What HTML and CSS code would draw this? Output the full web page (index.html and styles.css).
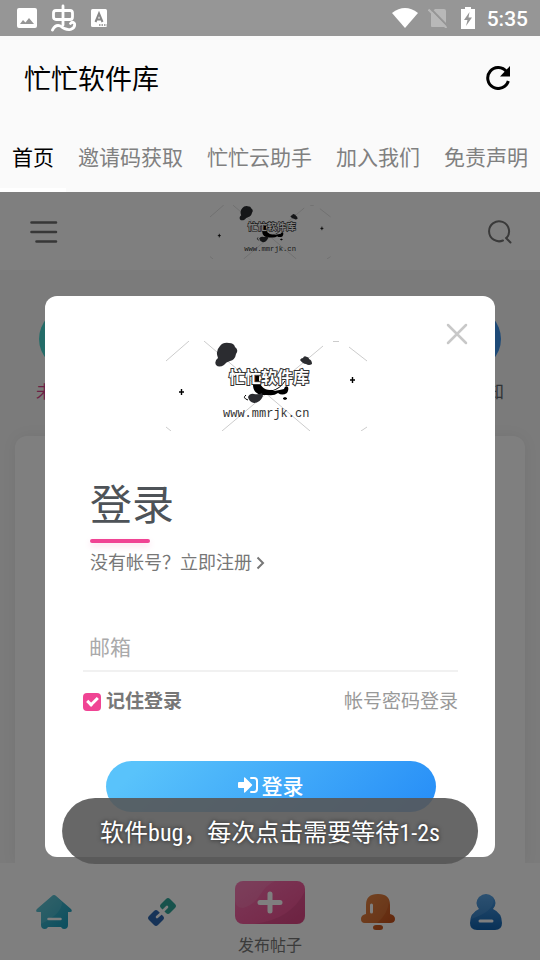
FILE: index.html
```html
<!DOCTYPE html>
<html lang="zh-CN">
<head>
    <meta charset="UTF-8">
    <meta name="viewport" content="width=device-width, initial-scale=1.0">
    <title>忙忙软件库</title>
    <link rel="stylesheet" href="styles.css">
</head>
<body>
    <svg class="defs" width="0" height="0" aria-hidden="true">
        <symbol id="logo" viewBox="0 0 210 90">
            <g fill="none" stroke="#ccc" stroke-width="1">
                <path d="M0 20 23 0M38 0l106 90M157 5 56 90M167 .5h6M183 6l18 14M0 86l5 4M201 86l-6 4"/>
            </g>
            <path fill="#2b2c30" d="M54 5q3-4 9-3 5 0 6 4 4 3 1 7-1 6-6 7-4 1-6 4-5 3-8 0-2-4 2-7-3-7 2-12zM134 19q1-2 3-2 1-3 4-1 2 0 2 2 3 1 3 5-3 2-6 0-3 0-6-4z"/>
            <path fill="#000" d="M89 35q5-2 7 3 2 9 12 12 6-1 10-2 1-4 4-2 1 3-1 6-5 3-9 0-4 3-10 2-15 1-15-10z"/>
            <path fill="#2b2c30" d="M82 56q2-4 6-3 5 1 8-1l1 3q-3 7-9 7-5-1-6-6z"/>
            <path fill="none" stroke="#000" d="M80 54q-4 3 2 5M105 50q9-2 14-10"/>
            <path fill="none" stroke="#000" stroke-width="1.4" d="M13 51h5M15.500 48v6M184 39h5M186.500 36v6M117 57.500h4M119 56v3"/>
            <circle cx="104" cy="38" r="11" fill="#fff"/>
        </symbol>
        <linearGradient id="gHome" x1="0" y1="0" x2="1" y2="1">
            <stop offset="0" stop-color="#5dc0d0"/><stop offset="1" stop-color="#109abc"/>
        </linearGradient>
        <linearGradient id="gPost" x1="0" y1="0" x2="1" y2="1">
            <stop offset="0" stop-color="#f870b0"/><stop offset="1" stop-color="#ea4c8c"/>
        </linearGradient>
        <linearGradient id="gBell" x1="0" y1="0" x2="1" y2="1">
            <stop offset="0" stop-color="#e4803c"/><stop offset="1" stop-color="#c04a16"/>
        </linearGradient>
        <linearGradient id="gUser" x1="0" y1="0" x2="0" y2="1">
            <stop offset="0" stop-color="#4c9be0"/><stop offset="1" stop-color="#1262ae"/>
        </linearGradient>
    </svg>

    <div class="statusbar">
        <svg class="st-img" width="20" height="20" viewBox="0 0 20 20"><path fill="#fff" fill-rule="evenodd" d="M2 0h16q2 0 2 2v16q0 2-2 2H2q-2 0-2-2V2q0-2 2-2zM3 16h14l-5-6-3.500 4.500L6 12z"/></svg>
        <svg class="st-bug" width="26" height="28" viewBox="0 0 26 28"><g fill="none" stroke="#fff" stroke-width="2.800" stroke-linecap="round"><path d="M12 2v19M5 6.500h14q2.500 0 2.500 2.500v4q0 2.500-2.500 2.500H5q-2.500 0-2.500-2.500V9q0-2.500 2.500-2.500z"/><path d="M1.500 26q3-6 8-4 5 4.500 10 3.500 5-2 4-6-2-2.500-4 0"/></g></svg>
        <svg class="st-a" width="16" height="18" viewBox="0 0 16 18"><rect width="16" height="18" rx="1.500" fill="#fff"/><path fill="none" stroke="#888" stroke-width="2" d="M4.500 13 8 4.500l3.500 8.500M6 10.500h4"/><path stroke="#888" stroke-width="1.500" stroke-dasharray="1.500 1" d="M8 16h8"/></svg>
        <span class="spacer"></span>
        <svg class="st-wifi" width="26" height="20" viewBox="0 0 26 20"><path fill="#fff" d="M0 5Q13-5 26 5L13 20z"/></svg>
        <svg class="st-sim" width="20" height="20" viewBox="0 0 20 20"><path fill="#b8b8b8" d="M7 1h9q2 0 2 2v15q0 1-1 1H4q-1 0-1-1V5z"/><path stroke="#969696" stroke-width="2" d="M2 0l18 18.500"/><path stroke="#b8b8b8" stroke-width="2" d="M.5 1.500 18.500 20"/></svg>
        <svg class="st-bat" width="14" height="22" viewBox="0 0 14 22"><path fill="#fff" d="M4 0h6v2h4v20H0V2h4z"/><path fill="#969696" d="M8.500 5 3 13h3.500L5 19l6-8.500H7.500z"/></svg>
        <span class="clock">5:35</span>
    </div>

    <div class="appbar">
        <h1 class="app-title">忙忙软件库</h1>
        <button class="icon-btn" aria-label="刷新">
            <svg width="24" height="24" viewBox="0 0 24 24"><path fill="none" stroke="#000" stroke-width="3" d="M20.500 5.500A10.500 10.500 0 1 0 22.300 15"/><path d="M24 0v10.500H14z"/></svg>
        </button>
    </div>

    <nav class="tabs">
        <a href="#" class="tab active">首页</a>
        <a href="#" class="tab">邀请码获取</a>
        <a href="#" class="tab">忙忙云助手</a>
        <a href="#" class="tab">加入我们</a>
        <a href="#" class="tab">免责声明</a>
    </nav>

    <div class="webview">
        <header class="site-header">
            <svg width="28" height="24" viewBox="0 0 28 24"><path fill="none" stroke="#6e6e6e" stroke-width="2.600" stroke-linecap="round" d="M1.500 2.500h24.500M1.500 12h24.500M6.500 21.500h19.500"/></svg>
            <svg class="site-logo" width="126" height="54" viewBox="0 0 210 90">
                <use href="#logo" width="210" height="90"/>
                <text class="logo-name" x="63" y="42">忙忙软件库</text>
                <text class="logo-url" x="57" y="76">www.mmrjk.cn</text>
            </svg>
            <svg width="24" height="24" viewBox="0 0 24 24"><path fill="none" stroke="#747474" stroke-width="2" stroke-linecap="round" d="M15 20.500A10 10 0 1 1 18.500 18M18 18l4.500 4.500"/></svg>
        </header>
        <div class="entries">
            <a href="#" class="entry pink"><i class="dot teal"></i>未读消息</a>
            <a href="#" class="entry"><i class="dot blue"></i>系统通知</a>
        </div>
        <div class="card"></div>
        <nav class="tabbar">
            <a href="#" class="nav-item" aria-label="首页">
                <svg width="36" height="34" viewBox="0 0 36 34"><path fill="url(#gHome)" d="M16 1q2-2 4 0l15 13q2 3-1 3h-2v13q0 4-4 4-2 0-3-2H12q-1 2-3 2-4 0-4-4V17H2q-3 0-1-3z"/><path fill="#7dd0da" opacity=".3" d="M16 1q2-2 4 0l6 6q0 12-21 22V17H2q-3 0-1-3z"/><path stroke="#fff" stroke-width="2.500" stroke-linecap="round" d="M12.500 24h12"/></svg>
            </a>
            <a href="#" class="nav-item" aria-label="链接">
                <svg width="28" height="28" viewBox="0 0 28 28"><path fill="#2fa598" d="M18 1q2-2 4 0l5 5q2 2 0 4l-5 5q-2 2-4 0l-5-5q-2-2 0-4z"/><path fill="#2d66b0" d="M6 13q2-2 4 0l5 5q2 2 0 4l-5 5q-2 2-4 0l-5-5q-2-2 0-4z"/><path stroke="#fff" stroke-width="2.600" stroke-linecap="round" d="M9 19l4-3.500M15 13l4-4"/></svg>
            </a>
            <a href="#" class="nav-item post">
                <svg width="70" height="43" viewBox="0 0 70 43"><rect width="70" height="43" rx="8" fill="url(#gPost)"/><path fill="#fff" opacity=".1" d="M0 8q0-8 8-8h32q-9 4-15 14T8 27Q1 27 0 20z"/><path fill="#8d2050" opacity=".15" d="M70 10v25q0 8-8 8H18Q56 39 70 10z"/><path stroke="#fff" stroke-width="5" stroke-linecap="round" d="M35 13v17M25 21.500h20"/></svg>
                <span>发布帖子</span>
            </a>
            <a href="#" class="nav-item" aria-label="消息">
                <svg width="36" height="38" viewBox="0 0 36 38"><path fill="url(#gBell)" d="M6 21V12Q6 1 18 1t12 11v9q5 1 5 5t-5 4H5q-4 0-4-4t5-5zM16 32h4q3 0 3 2.500T20 37h-4q-3 0-3-2.500t3-2.500z"/><path fill="#f0a060" opacity=".25" d="M6 21V12Q6 1 18 1q9 0 11 7-1 13-12 22H5q-4 0-4-4t5-5z"/><path stroke="#fff" stroke-width="3" stroke-linecap="round" d="M11.500 12v7"/></svg>
            </a>
            <a href="#" class="nav-item" aria-label="我的">
                <svg width="34" height="38" viewBox="0 0 34 38"><path fill="url(#gUser)" d="M10 16Q5 10 10 4q7-6 14 0 5 6 0 12 9 4 9 14 0 7-7 7H8q-7 0-7-7 0-10 9-14z"/><path fill="#8cc4f0" opacity=".2" d="M10 16Q5 10 10 4q7-6 14 0 4 13-22 22 1-6 8-10z"/><path stroke="#fff" stroke-width="3" stroke-linecap="round" d="M11 28h12"/></svg>
            </a>
        </nav>

        <div class="overlay">
            <form class="modal">
                <button type="button" class="close" aria-label="关闭">
                    <svg width="22" height="22" viewBox="0 0 22 22"><path stroke="#c8c8c8" stroke-width="2.500" stroke-linecap="round" d="M2 2l18 18M20 2 2 20"/></svg>
                </button>
                <svg class="modal-logo" width="210" height="90" viewBox="0 0 210 90">
                    <use href="#logo" width="210" height="90"/>
                    <text class="logo-name" x="63" y="42">忙忙软件库</text>
                    <text class="logo-url" x="57" y="76">www.mmrjk.cn</text>
                </svg>
                <div class="heading">
                    <h2>登录</h2>
                    <a href="#" class="register">没有帐号？立即注册<svg width="9" height="14" viewBox="0 0 9 14"><path fill="none" stroke="#777" stroke-width="2" d="M1.500 1.500 7 7l-5.500 5.500"/></svg></a>
                </div>
                <input type="text" class="field" placeholder="邮箱" aria-label="邮箱">
                <div class="options">
                    <label class="remember"><input type="checkbox" class="check" checked>记住登录</label>
                    <a href="#" class="switch">帐号密码登录</a>
                </div>
                <button type="button" class="submit">
                    <svg width="20" height="16" viewBox="0 0 20 16"><path fill="#fff" d="M0 6q0-1 1-1h5V1q0-1 1-.5l7 7q.5.500 0 1l-7 7q-1 .500-1-.5v-4H1q-1 0-1-1z"/><path fill="none" stroke="#fff" stroke-width="2" stroke-linecap="round" d="M13 1h3q3 0 3 3v8q0 3-3 3h-3"/></svg>
                    登录
                </button>
            </form>
        </div>
        <div class="toast">软件bug，每次点击需要等待1-2s</div>
    </div>
</body>
</html>
```

FILE: styles.css
```css
* {
    box-sizing: border-box;
}
body {
    margin: 0;
    min-height: 100vh;
    display: flex;
    flex-direction: column;
    font-family: Roboto, "Noto Sans CJK SC", sans-serif;
    background: #fafafa;
    color: #000;
}
a {
    color: inherit;
    text-decoration: none;
}
button {
    border: none;
    background: none;
    padding: 0;
    font-family: inherit;
    cursor: pointer;
}
svg {
    display: block;
    flex-shrink: 0;
}
.defs {
    position: absolute;
}
.logo-name {
    font: 700 16px "Noto Sans CJK SC", sans-serif;
    fill: #fff;
    stroke: #333;
    stroke-width: 2px;
    paint-order: stroke;
}
.logo-url {
    font: 12px "Liberation Mono", monospace;
    fill: #333;
}

/* status bar */
.statusbar {
    height: 36px;
    padding: 0 12px 0 17px;
    display: flex;
    align-items: center;
    background: #969696;
    color: #fff;
}
.st-bug {
    margin-left: 14px;
}
.st-a {
    margin-left: 14px;
}
.spacer {
    flex: 1;
}
.st-sim {
    margin-left: 10px;
}
.st-bat {
    margin: 0 12px 0 13px;
}
.clock {
    padding-top: 2px;
    font-size: 21px;
    font-weight: 500;
}

/* app bar and tabs */
.appbar {
    height: 84px;
    padding: 0 30px 0 24px;
    display: flex;
    align-items: center;
    justify-content: space-between;
}
.app-title {
    margin: 0;
    padding-bottom: 2px;
    font-size: 27px;
    font-weight: 400;
}
.tabs {
    height: 72px;
    display: flex;
    overflow: hidden;
    white-space: nowrap;
}
.tab {
    padding: 4px 12px 0;
    border-bottom: 4px solid transparent;
    font-size: 21px;
    line-height: 68px;
    color: #808080;
}
.tab.active {
    color: #000;
    border-bottom-color: #fff;
}

/* page under the dialog */
.webview {
    position: relative;
    flex: 1;
    display: flex;
    flex-direction: column;
    background: #f6f6f6;
}
.site-header {
    height: 78px;
    padding: 2px 28px 0 30px;
    display: flex;
    align-items: center;
    justify-content: space-between;
    background: #fff;
}
.entries {
    padding: 38px 25px 0;
    display: flex;
    justify-content: space-between;
}
.entry {
    width: 90px;
    display: flex;
    flex-direction: column;
    align-items: center;
    font-size: 17px;
    line-height: 28px;
    color: #60666c;
}
.entry.pink {
    color: #d8408c;
}
.dot {
    width: 62px;
    height: 62px;
    margin-bottom: 8px;
    border-radius: 50%;
}
.teal {
    background: #48d8d0;
}
.blue {
    background: #3c94ee;
}
.card {
    flex: 1;
    margin: 30px 15px 0;
    border-radius: 12px 12px 0 0;
    background: #fff;
    box-shadow: 0 0 15px rgba(0, 0, 0, 0.06);
}
.tabbar {
    position: relative;
    height: 97px;
    display: flex;
    background: #fff;
}
.nav-item {
    flex: 1;
    display: flex;
    flex-direction: column;
    align-items: center;
    justify-content: center;
    font-size: 16px;
    line-height: 22px;
    color: #777;
}
.nav-item.post {
    justify-content: flex-end;
    gap: 11px;
    padding-bottom: 3px;
}

/* login dialog */
.overlay {
    position: absolute;
    inset: 0;
    display: flex;
    align-items: center;
    background: rgba(0, 0, 0, 0.5);
}
.modal {
    position: relative;
    flex: 1;
    margin: 0 45px;
    padding: 45px 37px 45px 38px;
    border-radius: 12px;
    background: #fff;
}
.close {
    position: absolute;
    top: 27px;
    right: 27px;
}
.modal-logo {
    margin: 0 auto;
}
.heading {
    margin: 45px 7px 0;
}
.heading h2 {
    margin: 0;
    font-size: 42px;
    font-weight: 400;
    line-height: 60px;
    color: #4e5358;
}
.heading h2::after {
    content: "";
    display: block;
    width: 60px;
    height: 4px;
    margin-top: 3px;
    border-radius: 2px;
    background: #f04494;
    box-shadow: 0 3px 6px rgba(240, 68, 148, 0.2);
}
.register {
    display: flex;
    align-items: center;
    gap: 4px;
    margin-top: 7px;
    font-size: 18px;
    line-height: 26px;
    color: #777;
}
.field {
    display: block;
    width: 100%;
    height: 48px;
    margin-top: 48px;
    padding: 2px 6px 0;
    border: none;
    border-bottom: 2px solid #f1f1f1;
    background: none;
    font-family: inherit;
    font-size: 21px;
    outline: none;
}
.field::placeholder {
    color: #aaa;
}
.options {
    display: flex;
    justify-content: space-between;
    align-items: center;
    margin-top: 15px;
    font-size: 19px;
    line-height: 30px;
    color: #777;
}
.remember {
    display: flex;
    align-items: center;
    gap: 5px;
    font-weight: 700;
}
.check {
    appearance: none;
    position: relative;
    width: 18px;
    height: 18px;
    margin: 0;
    border-radius: 4px;
    background: #f04494;
}
.check:checked::after {
    content: "";
    box-sizing: border-box;
    position: absolute;
    left: 4px;
    top: 4px;
    width: 11px;
    height: 7px;
    border-left: 3px solid #fff;
    border-bottom: 3px solid #fff;
    transform: rotate(-45deg);
}
.switch {
    color: #999;
}
.submit {
    display: flex;
    align-items: center;
    justify-content: center;
    gap: 4px;
    width: 88%;
    height: 51px;
    margin: 44px auto 0;
    padding-bottom: 3px;
    border-radius: 26px;
    background: linear-gradient(135deg, #59c3fb 10%, #268df7 100%);
    color: #fff;
    font-size: 21px;
    font-weight: 500;
}

.toast {
    position: absolute;
    left: 50%;
    bottom: 96px;
    transform: translateX(-50%);
    padding: 4px 38px 0;
    border-radius: 33px;
    background: rgba(86, 86, 86, 0.9);
    color: #fff;
    font-family: "Roboto Condensed", Roboto, "Noto Sans CJK SC", sans-serif;
    font-size: 24px;
    line-height: 62px;
    white-space: nowrap;
    text-shadow: 0 0 4px rgba(0, 0, 0, 0.7);
}
```
